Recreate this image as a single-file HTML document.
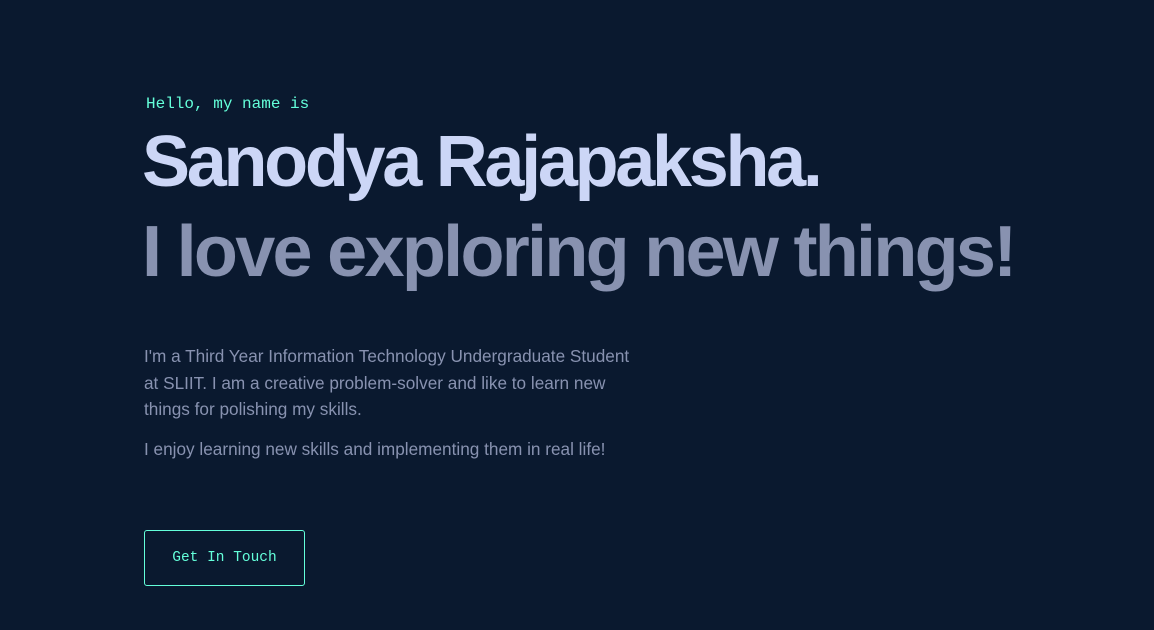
<!DOCTYPE html>
<html><head><style>
html,body{margin:0;padding:0;background:#0a192f;width:1154px;height:630px;overflow:hidden}
.a{position:absolute;white-space:nowrap;line-height:1}
.hello{left:146px;top:96px;font-family:"Liberation Mono",monospace;font-size:16px;color:#64ffda}
.h1{left:142px;top:126px;font-family:"Liberation Sans",sans-serif;font-weight:700;font-size:72px;color:#ccd6f6;letter-spacing:-3.3px}
.h2{left:142px;top:216px;font-family:"Liberation Sans",sans-serif;font-weight:700;font-size:72px;color:#8892b0;letter-spacing:-2.7px}
.p{left:144px;font-family:"Liberation Sans",sans-serif;font-size:17.2px;color:#8892b0;line-height:26.5px;white-space:normal;width:500px}
.btn{left:144px;top:530px;width:159px;height:54px;border:1px solid #64ffda;border-radius:3px;font-family:"Liberation Mono",monospace;font-size:14.5px;color:#64ffda;display:flex;align-items:center;justify-content:center}
</style></head><body>
<div class="a hello">Hello, my name is</div>
<div class="a h1">Sanodya Rajapaksha.</div>
<div class="a h2">I love exploring new things!</div>
<div class="a p" style="top:343px">I'm a Third Year Information Technology Undergraduate Student at SLIIT. I am a creative problem-solver and like to learn new things for polishing my skills.</div>
<div class="a p" style="top:436px">I enjoy learning new skills and implementing them in real life!</div>
<div class="a btn">Get In Touch</div>
</body></html>
